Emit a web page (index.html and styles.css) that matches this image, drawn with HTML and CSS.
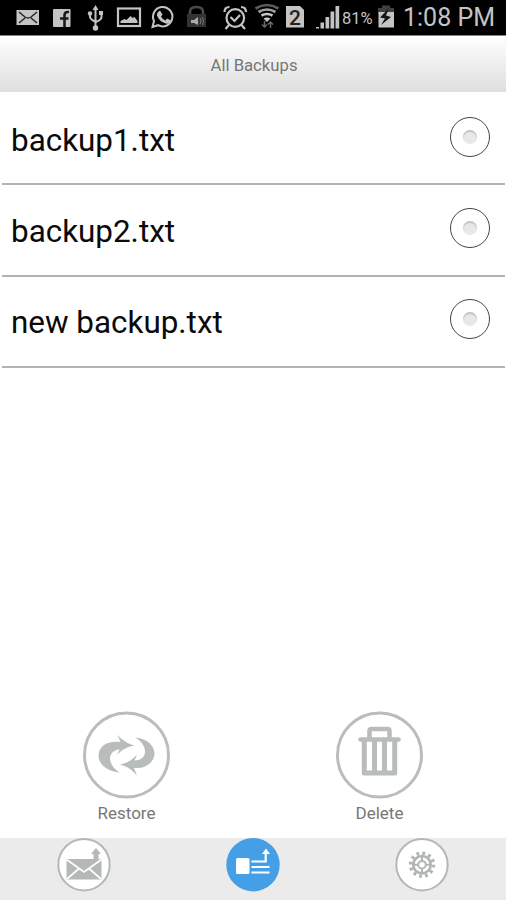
FILE: index.html
```html
<!DOCTYPE html>
<html lang="en">
<head>
<meta charset="utf-8">
<title>All Backups</title>
<link rel="stylesheet" href="styles.css">
</head>
<body>
<div class="screen">
  <div class="status">
    <svg width="46" height="35" viewBox="0 0 46 35"><path fill="#c4c4c4" d="M16.500 10H39v15H16.500z"/><path fill="none" stroke="#222" stroke-width="1.500" d="M19 12l6 5q3 2 6 0l6-5M19 23l6-5M37 23l-6-5"/></svg>
    <svg width="33" height="35" viewBox="46 0 33 35"><rect x="53" y="9" width="17.500" height="18" rx="1" fill="#c4c4c4"/><path fill="none" stroke="#1a1a1a" stroke-width="2.600" d="M69 12h-1.500q-3 0-3 3.500V27M60 18.500h8.500"/></svg>
    <svg width="31" height="35" viewBox="79 0 31 35"><g fill="none" stroke="#c4c4c4" stroke-width="2"><path d="M95.500 9v19M90 13v4q0 2 5.500 5M101.500 13v4q0 3-6 5"/></g><path fill="#c4c4c4" d="M95.500 5l3 5h-6zM99 11h4v4h-4z"/><circle cx="90" cy="13.500" r="2.200" fill="#c4c4c4"/><circle cx="95.500" cy="28" r="2.700" fill="#c4c4c4"/></svg>
    <svg width="36" height="35" viewBox="110 0 36 35"><rect x="118" y="8.500" width="22" height="17.500" fill="none" stroke="#c4c4c4" stroke-width="2.200"/><path fill="#c4c4c4" d="M120.500 23v-2l4-2 2 1 4-4 2 2 2-1 3 4v2z"/></svg>
    <svg width="34" height="35" viewBox="146 0 34 35"><path fill="none" stroke="#c4c4c4" stroke-width="2" d="M152.500 27l1.500-6a9.700 9.700 0 1 1 4 4.200z"/><path fill="#c4c4c4" d="M158 12l2-1.500 2.500 4-1.500 2q1.500 3 4.500 4l1.500-2 4 2q-1 4-5 3-7-2-9-8-.500-2 1-3.500z"/></svg>
    <svg width="35" height="35" viewBox="180 0 35 35"><path fill="none" stroke="#4b4b4b" stroke-width="2.500" d="M190 15v-3q0-5 6.500-5t6.500 5v3"/><path fill="#333" d="M187 14h19v13h-19z"/><path fill="#aaa" d="M191 20h3l4-3v8l-4-2h-3z"/><path fill="none" stroke="#777" d="M200 18q2 3 0 6M202.500 17q2 4 0 8"/></svg>
    <svg width="36" height="35" viewBox="215 0 36 35"><g fill="none" stroke="#c4c4c4" stroke-width="2.200"><circle cx="235.300" cy="18" r="8.800"/><path d="M224.500 12q0-5 5-5M246 12q0-5-5-5M230.500 17l4 4 5.500-6M229 25l-3.500 4M241.500 25l3.500 4"/></g></svg>
    <svg width="32" height="35" viewBox="251 0 32 35"><g fill="none" stroke-width="2.700"><path stroke="#5c5c5c" d="M255.500 8.500q11.500-7 23 0"/><path stroke="#a0a0a0" d="M258.500 12q8.500-5 17 0"/><path stroke="#c8c8c8" d="M261.500 15.500q5.500-3 11 0"/></g><path fill="#c8c8c8" d="M263.500 18.500q3.500-2 7 0l-3.500 3.500z"/><path fill="none" stroke="#686868" stroke-width="1.500" d="M264.500 21v6m-2.500-2.500l2.500 2.500 2.500-2.500M270.500 28v-6m-2.500 2.500l2.500-2.500 2.500 2.500"/></svg>
    <svg width="27" height="35" viewBox="283 0 27 35"><path fill="#c4c4c4" d="M286 6h14l4 4v17.500h-18z"/><text x="295" y="24.500" text-anchor="middle" class="sim">2</text></svg>
    <svg width="31" height="35" viewBox="310 0 31 35"><path fill="#c4c4c4" d="M316 27h3v1.500h-3zM320.500 22.500h3.500v6h-3.500zM325.500 17h3.700v11.500h-3.700zM330.500 11.500h3.700v17h-3.700zM335.500 6h3.700v22.500h-3.700z"/></svg>
    <span class="percent">81%</span>
    <svg width="28" height="35" viewBox="375 0 28 35"><path fill="#404040" d="M378 8h4V5.500h8V8h4v6h-16z"/><path fill="#c4c4c4" d="M378.500 12H394v15.500h-15.500z"/><path fill="#151515" d="M389 8l-9 9.500 5 1-4 6.500 10-8-5-1.500z"/></svg>
    <span class="time">1:08 PM</span>
  </div>
  <header class="title">All Backups</header>
  <ul class="list">
    <li class="row"><span>backup1.txt</span><i class="radio"></i></li>
    <li class="row"><span>backup2.txt</span><i class="radio"></i></li>
    <li class="row"><span>new backup.txt</span><i class="radio"></i></li>
  </ul>
  <div class="actions">
    <div class="action">
      <svg width="88" height="88" viewBox="0 0 88 88"><circle cx="43.500" cy="44" r="42" fill="#fff" stroke="#bbbdbd" stroke-width="3"/><g fill="#b9bcbc"><path d="M36.500 61.500C24 60.500 15.500 53 15.500 44.500C16 35 24 29.500 37.500 31L34.500 23.700C40 30 46 33 51.500 34.500C46 35.500 39 38 34 44L36.500 38.500C30 39 27 43 27 48C27.500 53 31 58 36.500 61.500Z"/><path d="M52.500 26.500C65 28 71.500 35 71.500 43C71 52 62 58 51 57L54 64.700C49 58.500 43 55 37 53.500C43 52.500 49 49.500 54 43.500L51.500 49.500C58 49.500 62 46 62 40.500C62 35 58 30 52.500 26.500Z"/></g></svg>
      <span>Restore</span>
    </div>
    <div class="action">
      <svg width="88" height="88" viewBox="0 0 88 88"><circle cx="43.500" cy="44" r="42" fill="#fff" stroke="#bbbdbd" stroke-width="3"/><g fill="none" stroke="#b9bcbc"><path stroke-width="4.500" stroke-linecap="round" d="M24.500 28.500h38"/><path stroke-width="4.500" stroke-linejoin="round" d="M33.500 28v-8q0-2 2-2h16q2 0 2 2V28"/><path stroke-width="5" stroke-linejoin="round" d="M28.300 30v32h30.400V30"/><path stroke-width="5" d="M38.500 30v32M48.500 30v32"/></g></svg>
      <span>Delete</span>
    </div>
  </div>
  <nav class="tabs">
    <svg width="54" height="54" viewBox="0 0 54 54"><circle cx="27" cy="26.700" r="25.700" fill="#fff" stroke="#b5b7b7" stroke-width="2"/><path fill="#b5b8b8" d="M9.500 21h35v20.500h-35zM36.500 22V16H34l5-6 5 6h-2.500v6z"/><path fill="none" stroke="#fff" stroke-width="1.700" d="M9.500 21.500L27 34l17.500-12.500M10 41l12-10.500M44 41L32 30.500"/></svg>
    <svg width="54" height="54" viewBox="0 0 54 54"><circle cx="27" cy="26.700" r="26.700" fill="#449fe6"/><rect x="10" y="20" width="13.500" height="16" rx="1.500" fill="#fff"/><path fill="none" stroke="#fff" stroke-width="2.200" d="M25.500 23.500h14.200V14M25.500 29h18M25.500 34.500h18"/><path fill="#fff" d="M40 10.500l4 5.500h-8z"/></svg>
    <svg width="54" height="54" viewBox="0 0 54 54"><circle cx="27" cy="26.700" r="25.700" fill="#fff" stroke="#b5b7b7" stroke-width="2"/><g fill="none" stroke="#b2b5b5"><circle cx="27" cy="26.700" r="8.700" stroke-width="2.700"/><circle cx="27" cy="26.700" r="11.500" stroke-width="3.500" stroke-dasharray="2.800 3.221"/><circle cx="27" cy="26.700" r="3.800" stroke-width="2"/><path stroke-width="2" d="M27 18v5M27 30.500V36M18 26.700h5M31 26.700H36"/></g></svg>
  </nav>
</div>
</body>
</html>
```
FILE: styles.css
```css
* { box-sizing: border-box; }
body { margin: 0; font-family: Roboto, "Liberation Sans", sans-serif; background: #fff; }
.screen { width: 506px; height: 900px; display: flex; flex-direction: column; overflow: hidden; }
.status { height: 36px; flex: none; display: flex; background: #000; border-bottom: 1px solid #858585; color: #c4c4c4; white-space: nowrap; }
.status svg { flex: none; display: block; }
.sim { font: 500 21px Roboto, sans-serif; fill: #222; }
.percent { width: 34px; padding-left: 1px; font-size: 16.500px; line-height: 37px; }
.time { font-size: 25px; line-height: 35px; }
.title { height: 56px; flex: none; background: linear-gradient(#fff, #dedede); color: #777; font-size: 16.700px; line-height: 59px; text-align: center; padding-left: 2px; }
.list { list-style: none; margin: 0; padding: 2px 1px 0 2px; }
.row { height: 91.300px; padding: 0 15px 0 9px; display: flex; align-items: center; justify-content: space-between; border-bottom: 2px solid #b3b3b3; color: #0a0a0a; font-size: 31.400px; }
.row span { padding-top: 3px; }
.radio { width: 40px; height: 40px; margin-bottom: 4px; border: 1.500px solid #444; border-radius: 50%; display: grid; place-items: center; }
.radio::after { content: ""; width: 14px; height: 14px; border-radius: 50%; background: #e8e8e8; box-shadow: inset 0 2px 1px #c4c4c4; }
.actions { margin-top: auto; height: 126px; flex: none; display: grid; grid-template-columns: 1fr 1fr; }
.action { display: flex; flex-direction: column; align-items: center; color: #777; font-size: 17px; line-height: 20px; gap: 4px; }
.action svg { display: block; margin-top: -1px; }
.tabs svg { display: block; }
.tabs { height: 62px; flex: none; display: grid; grid-template-columns: repeat(3, 1fr); justify-items: center; background: #ebebeb; }
```
